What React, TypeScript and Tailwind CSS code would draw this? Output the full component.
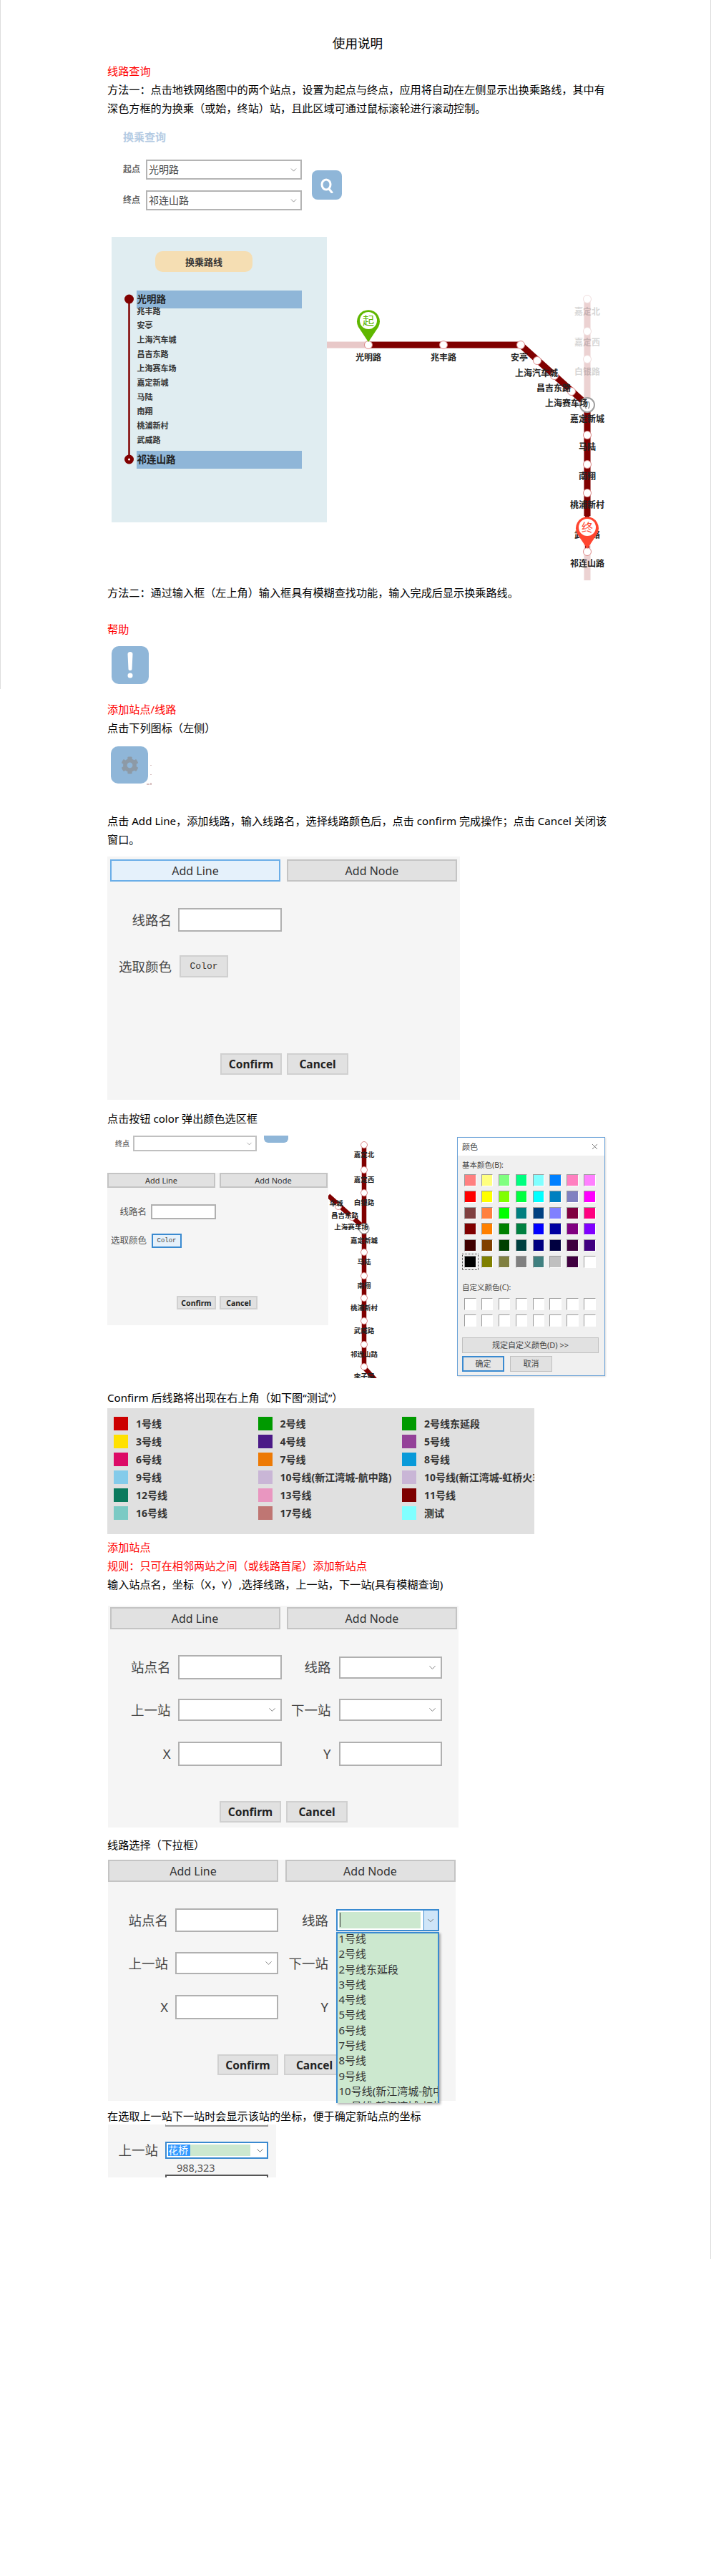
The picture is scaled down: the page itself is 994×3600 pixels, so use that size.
import { ChevronDown, X } from "lucide-react";
import { FaCog } from "react-icons/fa";

const BLUE = "bg-[#8fb6d8]";
const ROUTE = ["兆丰路", "安亭", "上海汽车城", "昌吉东路", "上海赛车场", "嘉定新城", "马陆", "南翔", "桃浦新村", "武威路"];

const LEGEND = [
  ["1号线", "#cc0000"], ["2号线", "#009a00"], ["2号线东延段", "#009a00"],
  ["3号线", "#ffe100"], ["4号线", "#4b1a87"], ["5号线", "#944199"],
  ["6号线", "#dc0a66"], ["7号线", "#ed7a05"], ["8号线", "#099ad9"],
  ["9号线", "#84cbea"], ["10号线(新江湾城-航中路)", "#c9b6d6"], ["10号线(新江湾城-虹桥火车站)", "#c9b6d6"],
  ["12号线", "#0a7a5d"], ["13号线", "#e996c0"], ["11号线", "#7d0000"],
  ["16号线", "#7bcac4"], ["17号线", "#bf7673"], ["测试", "#80ffff"],
];

const BASIC_COLORS = [
  "#ff8080", "#ffff80", "#80ff80", "#00ff80", "#80ffff", "#0080ff", "#ff80c0", "#ff80ff",
  "#ff0000", "#ffff00", "#80ff00", "#00ff40", "#00ffff", "#0080c0", "#8080c0", "#ff00ff",
  "#804040", "#ff8040", "#00ff00", "#008080", "#004080", "#8080ff", "#800040", "#ff0080",
  "#800000", "#ff8000", "#008000", "#008040", "#0000ff", "#0000a0", "#800080", "#8000ff",
  "#400000", "#804000", "#004000", "#004040", "#000080", "#000040", "#400040", "#400080",
  "#000000", "#808000", "#808040", "#808080", "#408080", "#c0c0c0", "#400040", "#ffffff",
];

const DROPDOWN = ["1号线", "2号线", "2号线东延段", "3号线", "4号线", "5号线", "6号线", "7号线", "8号线", "9号线", "10号线(新江湾城-航中路)", "10号线(新江湾城-虹桥火车站)"];

function Line({ children, red }: { children: React.ReactNode; red?: boolean }) {
  return <p className={red ? "text-[#ff0000]" : "text-black"}>{children}</p>;
}

function Tab({ label, active, small }: { label: string; active?: boolean; small?: boolean }) {
  return (
    <div
      className={`flex items-center justify-center border-2 ${
        active ? "border-[#6aaee8] bg-[#e5f1fb]" : "border-[#c4c4c4] bg-[#e1e1e1]"
      } ${small ? "w-[151px] h-[21px] text-[11px]" : "w-[238px] h-[31px] text-[16px]"} text-[#333]`}
    >
      {label}
    </div>
  );
}

function ActionBtn({ label, className }: { label: string; className: string }) {
  return (
    <div className={`flex items-center justify-center border-2 border-[#d0d0d0] bg-[#e1e1e1] font-bold text-[#222] ${className}`}>
      {label}
    </div>
  );
}

function FormInput({ className }: { className: string }) {
  return <div className={`bg-white border-2 border-[#b0b0b0] ${className}`} />;
}

function FormSelect({ className }: { className: string }) {
  return (
    <div className={`flex items-center justify-end pr-[4px] bg-white border-2 border-[#b0b0b0] ${className}`}>
      <ChevronDown size={15} className="text-[#777]" strokeWidth={1.5} />
    </div>
  );
}

function Label({ text, className }: { text: string; className: string }) {
  return <span className={`text-right text-[18.5px] text-[#444] leading-[28px] ${className}`}>{text}</span>;
}

function QuerySelect({ label, value }: { label: string; value: string }) {
  return (
    <div className="flex items-center">
      <span className="w-[32px] text-[12px] font-bold text-[#666]">{label}</span>
      <div className="flex items-center justify-between w-[218px] h-[28px] pl-[2px] pr-[3px] bg-white border-2 border-[#b4b4b4] text-[14px] text-[#444]">
        {value}
        <ChevronDown size={13} className="text-[#777]" strokeWidth={1.5} />
      </div>
    </div>
  );
}

function Node({ x, y, r = 5.5, pale }: { x: number; y: number; r?: number; pale?: boolean }) {
  return <circle cx={x} cy={y} r={r} fill="#fff" stroke={pale ? "#f0dddd" : "#d88"} strokeWidth={1} />;
}

function MapLabel({ x, y, text, size = 12, pale }: { x: number; y: number; text: string; size?: number; pale?: boolean }) {
  return (
    <text x={x} y={y} textAnchor="middle" dominantBaseline="central" fontSize={size} fontWeight={700} fill="#222" opacity={pale ? 0.18 : 1}>
      {text}
    </text>
  );
}

function Interchange({ x, y, r }: { x: number; y: number; r: number }) {
  const k = r / 10;
  return (
    <g>
      <circle cx={x} cy={y} r={r} fill="#fff" stroke="#a0a0a0" strokeWidth={2 * k} />
      <path
        d={`M${x - 1.5 * k} ${y - 5 * k}Q${x - 5 * k} ${y} ${x - 1.5 * k} ${y + 5 * k}M${x + 1.5 * k} ${y - 5 * k}Q${x + 5 * k} ${y} ${x + 1.5 * k} ${y + 5 * k}`}
        fill="none"
        stroke="#999"
        strokeWidth={1.5 * k}
      />
    </g>
  );
}

function Pin({ x, y, color, text }: { x: number; y: number; color: string; text: string }) {
  return (
    <g>
      <path d={`M${x} ${y + 30}L${x - 14} ${y + 9}A16 16 0 1 1 ${x + 14} ${y + 9}Z`} fill={color} />
      <circle cx={x} cy={y} r={12} fill="#fff" />
      <text x={x} y={y} textAnchor="middle" dominantBaseline="central" fontSize={16} fill={color}>
        {text}
      </text>
    </g>
  );
}

function RouteMap() {
  return (
    <svg width={393} height={484} viewBox="457 330 393 484" className="shrink-0">
      <path d="M457 481H515" stroke="#e8c8c8" strokeWidth={9} fill="none" />
      <path d="M821 417V810" stroke="#ecd2d2" strokeWidth={9} fill="none" />
      <path d="M515 481H728L821 565V720" stroke="#800000" strokeWidth={9} fill="none" strokeLinejoin="round" />
      <path d="M821 720V770" stroke="#800000" strokeWidth={6} fill="none" />
      <Node x={821} y={417} pale />
      <Node x={821} y={462} pale />
      <Node x={821} y={501} pale />
      {[
        [515, 481], [620, 481], [728, 481], [751, 503], [775, 524], [799, 546], [821, 607], [821, 648], [821, 688], [821, 770],
      ].map(([x, y]) => (
        <Node key={`${x}-${y}`} x={x} y={y} />
      ))}
      <Interchange x={821} y={565} r={10} />
      <MapLabel x={821} y={434} text="嘉定北" pale />
      <MapLabel x={821} y={477} text="嘉定西" pale />
      <MapLabel x={821} y={518} text="白银路" pale />
      <MapLabel x={515} y={498} text="光明路" />
      <MapLabel x={620} y={498} text="兆丰路" />
      <MapLabel x={726} y={498} text="安亭" />
      <MapLabel x={750} y={520} text="上海汽车城" />
      <MapLabel x={774} y={541} text="昌吉东路" />
      <MapLabel x={792} y={562} text="上海赛车场" />
      <MapLabel x={821} y={584} text="嘉定新城" />
      <MapLabel x={821} y={623} text="马陆" />
      <MapLabel x={821} y={664} text="南翔" />
      <MapLabel x={821} y={704} text="桃浦新村" />
      <MapLabel x={821} y={746} text="武威路" />
      <MapLabel x={821} y={786} text="祁连山路" />
      <Pin x={515} y={447} color="#5fb700" text="起" />
      <Pin x={821} y={736} color="#ff4530" text="终" />
    </svg>
  );
}

function SmallMap() {
  const nodes = [1599, 1634, 1666, 1749, 1782, 1813, 1845, 1878, 1909];
  return (
    <svg width={180} height={339} viewBox="459 1586 180 339" className="shrink-0">
      <path d="M459 1670L509 1715" stroke="#800000" strokeWidth={6.5} fill="none" />
      <path d="M509 1599V1910L527 1930" stroke="#800000" strokeWidth={6.5} fill="none" />
      {nodes.map((y) => (
        <Node key={y} x={509} y={y} r={4.5} />
      ))}
      <Node x={473} y={1685} r={4.5} />
      <Node x={492} y={1700} r={4.5} />
      <Interchange x={509} y={1716} r={7} />
      <MapLabel x={470} y={1680} text="车城" size={9.5} />
      <MapLabel x={482} y={1697} text="昌吉东路" size={9.5} />
      <MapLabel x={491} y={1713} text="上海赛车场" size={9.5} />
      <MapLabel x={509} y={1612} text="嘉定北" size={9.5} />
      <MapLabel x={509} y={1647} text="嘉定西" size={9.5} />
      <MapLabel x={509} y={1679} text="白银路" size={9.5} />
      <MapLabel x={509} y={1732} text="嘉定新城" size={9.5} />
      <MapLabel x={509} y={1762} text="马陆" size={9.5} />
      <MapLabel x={509} y={1795} text="南翔" size={9.5} />
      <MapLabel x={509} y={1826} text="桃浦新村" size={9.5} />
      <MapLabel x={509} y={1858} text="武威路" size={9.5} />
      <MapLabel x={509} y={1891} text="祁连山路" size={9.5} />
      <MapLabel x={509} y={1922} text="李子园" size={9.5} />
    </svg>
  );
}

function ColorDialog() {
  return (
    <div className="w-[207px] h-[334px] mt-[2px] shrink-0 border border-[#6aa2d8] bg-[#f0f0f0] text-[#444] shadow-[1px_1px_2px_rgba(0,0,0,0.15)]">
      <div className="flex items-center justify-between h-[25px] pl-[6px] pr-[7px] bg-white text-[11px]">
        颜色
        <X size={13} strokeWidth={1.2} className="text-[#333]" />
      </div>
      <div className="pl-[6px]">
        <p className="mt-[6px] h-[15px] leading-[15px] text-[10.5px]">基本颜色(B):</p>
        <div className="grid grid-cols-[repeat(8,16.5px)] gap-x-[7.4px] gap-y-[5.8px] mt-[5px] ml-[3px]">
          {BASIC_COLORS.map((c, i) => (
            <div
              key={i}
              className={`h-[17px] border border-t-[#9a9a9a] border-l-[#9a9a9a] border-r-white border-b-white ${i === 40 ? "outline outline-offset-2 outline-1 outline-dotted outline-[#333]" : ""}`}
              style={{ backgroundColor: c }}
            />
          ))}
        </div>
        <p className="mt-[20px] h-[15px] leading-[15px] text-[10.5px]">自定义颜色(C):</p>
        <div className="grid grid-cols-[repeat(8,16.5px)] gap-x-[7.4px] gap-y-[5.8px] mt-[7px] ml-[3px]">
          {Array.from({ length: 16 }).map((_, i) => (
            <div key={i} className="h-[17px] bg-white border border-t-[#9a9a9a] border-l-[#9a9a9a] border-r-white border-b-white" />
          ))}
        </div>
        <div className="flex items-center justify-center w-[191px] h-[22px] mt-[15px] border border-[#c0c0c0] bg-[#e1e1e1] text-[11px]">
          规定自定义颜色(D) &gt;&gt;
        </div>
        <div className="flex gap-[8px] mt-[4px]">
          <div className="flex items-center justify-center w-[59px] h-[22px] border-2 border-[#3a8ad0] bg-[#e6e6e6] text-[11px]">确定</div>
          <div className="flex items-center justify-center w-[59px] h-[22px] border border-[#c0c0c0] bg-[#e1e1e1] text-[11px]">取消</div>
        </div>
      </div>
    </div>
  );
}

export default function App() {
  return (
    <div className="relative bg-white min-h-[3600px] font-['Noto_Sans','Noto_Sans_CJK_SC',sans-serif] text-[15.14px] leading-[26px]">
      <div className="absolute left-0 top-0 w-px h-[963px] bg-[#dddddd]" />
      <div className="absolute right-0 top-0 w-px h-[3157px] bg-[#dddddd]" />

      <div className="w-[700px] ml-[150px] pt-[47px]">
        <h1 className="text-center text-[17.6px] font-normal mb-[13px]">使用说明</h1>

        <Line red>线路查询</Line>
        <Line>
          方法一：点击地铁网络图中的两个站点，设置为起点与终点，应用将自动在左侧显示出换乘路线，其中有深色方框的为换乘（或始，终站）站，且此区域可通过鼠标滚轮进行滚动控制。
        </Line>

        {/* query form */}
        <div className="mt-[17px] ml-[22px] h-[20px] text-[15px] leading-[20px] font-bold text-[#b5cbe3]">换乘查询</div>
        <div className="flex items-center mt-[22px] ml-[22px]">
          <div className="flex flex-col gap-[15px]">
            <QuerySelect label="起点" value="光明路" />
            <QuerySelect label="终点" value="祁连山路" />
          </div>
          <div className={`flex items-center justify-center w-[42px] h-[41px] ml-[14px] rounded-[8px] ${BLUE}`}>
            <svg width="20" height="22" viewBox="0 0 20 22" fill="none" stroke="#fff" strokeWidth="3">
              <ellipse cx="9" cy="10" rx="6" ry="7" />
              <path d="M13 16l4 5" strokeLinecap="round" />
            </svg>
          </div>
        </div>

        {/* route panel + map */}
        <div className="flex mt-[37px]">
          <div className="w-[301px] h-[399px] ml-[6px] pt-[20px] bg-[#e0edf1] shrink-0">
            <div className="flex items-center justify-center w-[136px] h-[29px] ml-[61px] rounded-[10px] bg-[#f5deb3] text-[13px] font-bold text-[#333]">
              换乘路线
            </div>
            <div className="flex mt-[26px] ml-[17.5px]">
              <svg width="13" height="249" viewBox="0 0 13 249" className="shrink-0">
                <path d="M6.5 12V236" stroke="#800000" strokeWidth="2.5" />
                <circle cx="6.5" cy="12" r="6.5" fill="#800000" />
                <circle cx="6.5" cy="236" r="6.5" fill="#800000" />
                <circle cx="6.5" cy="236" r="1.5" fill="#fff" />
              </svg>
              <div className="w-[231px] ml-[4px]">
                <div className={`h-[25px] pl-[1px] ${BLUE} text-[13.5px] leading-[25px] font-bold text-[#222]`}>光明路</div>
                <div className="-mt-[6px] mb-[5px]">
                  {ROUTE.map((s) => (
                    <div key={s} className="h-[20px] pl-[1px] text-[11px] leading-[20px] font-bold text-[#333]">
                      {s}
                    </div>
                  ))}
                </div>
                <div className={`h-[25px] pl-[1px] ${BLUE} text-[13.5px] leading-[25px] font-bold text-[#222]`}>祁连山路</div>
              </div>
            </div>
          </div>
          <RouteMap />
        </div>

        <Line>方法二：通过输入框（左上角）输入框具有模糊查找功能，输入完成后显示换乘路线。</Line>

        <div className="mt-[25px]">
          <Line red>帮助</Line>
        </div>
        <div className={`flex items-center justify-center w-[52px] h-[53px] mt-[11px] ml-[6px] rounded-[10px] ${BLUE}`}>
          <svg width="8" height="38" viewBox="0 0 8 38" fill="#fff">
            <path d="M4 0c2 0 3.500 1 3.500 3L6.500 24c0 1-1 2-2.500 2s-2.500-1-2.500-2L.5 3C.5 1 2 0 4 0z" />
            <circle cx="4" cy="33" r="3.500" />
          </svg>
        </div>

        <div className="mt-[22px]">
          <Line red>添加站点/线路</Line>
        </div>
        <Line>点击下列图标（左侧）</Line>
        <div className="flex items-end mt-[13px] ml-[5px]">
          <div className={`flex items-center justify-center w-[52px] h-[52px] rounded-[10px] ${BLUE}`}>
            <FaCog size={25} className="text-[#8d9aa6]" />
          </div>
          <svg width="8" height="32" viewBox="0 0 8 32" className="-ml-[2px] -mb-[2px]">
            <path d="M6 4v1M6 17v1M6 29v3M0 31h4" stroke="#b08080" strokeWidth="1" />
          </svg>
        </div>

        <div className="mt-[39px]">
          <Line>
            点击 Add Line，添加线路，输入线路名，选择线路颜色后，点击 confirm 完成操作；点击 Cancel 关闭该
            <br />
            窗口。
          </Line>
        </div>

        {/* add line panel */}
        <div className="w-[493px] h-[340px] mt-[11px] pt-[4px] pl-[4px] bg-[#f5f5f5]">
          <div className="flex gap-[9px]">
            <Tab label="Add Line" active />
            <Tab label="Add Node" />
          </div>
          <div className="flex items-center mt-[37px]">
            <Label text="线路名" className="w-[86px]" />
            <FormInput className="w-[145px] h-[33px] ml-[9px]" />
          </div>
          <div className="flex items-center mt-[33px]">
            <Label text="选取颜色" className="w-[86px]" />
            <div className="flex items-center justify-center w-[68px] h-[31px] ml-[11px] border-2 border-[#d0d0d0] bg-[#e1e1e1] font-['Liberation_Mono',monospace] text-[13px] text-[#333]">
              Color
            </div>
          </div>
          <div className="flex gap-[7px] mt-[106px] ml-[154px]">
            <ActionBtn label="Confirm" className="w-[86px] h-[30px] text-[15.5px]" />
            <ActionBtn label="Cancel" className="w-[86px] h-[30px] text-[15.5px]" />
          </div>
        </div>

        <div className="mt-[13px]">
          <Line>点击按钮 color 弹出颜色选区框</Line>
        </div>

        {/* colour picker figure */}
        <div className="flex mt-[11px] h-[339px]">
          <div className="w-[309px] shrink-0">
            <div className="flex items-start h-[52px] ml-[11px]">
              <span className="w-[25px] mt-[4px] text-[10px] leading-[14px] font-bold text-[#777]">终点</span>
              <div className="flex items-center justify-end w-[173px] h-[22px] pr-[3px] bg-white border-2 border-[#c0c0c0]">
                <ChevronDown size={11} className="text-[#888]" strokeWidth={1.5} />
              </div>
              <div className={`w-[34px] h-[10px] ml-[10px] rounded-b-[6px] ${BLUE}`} />
            </div>
            <div className="h-[213px] bg-[#f5f5f5]">
              <div className="flex gap-[5.500px]">
                <Tab label="Add Line" small />
                <Tab label="Add Node" small />
              </div>
              <div className="flex items-center mt-[23px]">
                <span className="w-[55px] text-right text-[12.500px] leading-[20px] text-[#555]">线路名</span>
                <FormInput className="w-[91px] h-[21px] ml-[6px]" />
              </div>
              <div className="flex items-center mt-[20px]">
                <span className="w-[55px] text-right text-[12.500px] leading-[20px] text-[#555]">选取颜色</span>
                <div className="flex items-center justify-center w-[42px] h-[20px] ml-[7px] border-2 border-[#3a8ad0] bg-[#e5f1fb] font-['Liberation_Mono',monospace] text-[9px] text-[#444]">
                  Color
                </div>
              </div>
              <div className="flex gap-[5px] mt-[67px] ml-[97px]">
                <ActionBtn label="Confirm" className="w-[55px] h-[19px] text-[10.500px]" />
                <ActionBtn label="Cancel" className="w-[53px] h-[19px] text-[10.500px]" />
              </div>
            </div>
          </div>
          <SmallMap />
          <ColorDialog />
        </div>

        <div className="mt-[14px]">
          <Line>Confirm 后线路将出现在右上角（如下图“测试”）</Line>
        </div>

        {/* legend */}
        <div className="w-[597px] h-[176px] mt-[2px] pt-[12px] pl-[9px] bg-[#e0e0e0] overflow-hidden">
          <div className="grid grid-cols-[201.5px_201.5px_185px] gap-y-[6px]">
            {LEGEND.map(([name, color]) => (
              <div key={name} className="flex items-center h-[19px] whitespace-nowrap overflow-hidden">
                <div className="w-[20px] h-[19px] shrink-0" style={{ backgroundColor: color }} />
                <span className="ml-[11px] text-[14px] leading-[19px] font-bold text-[#333]">{name}</span>
              </div>
            ))}
          </div>
        </div>

        <div className="mt-[5px]">
          <Line red>添加站点</Line>
          <Line red>规则：只可在相邻两站之间（或线路首尾）添加新站点</Line>
          <Line>输入站点名，坐标（X，Y）,选择线路，上一站，下一站(具有模糊查询)</Line>
        </div>

        {/* add node panel */}
        <div className="w-[490px] h-[310px] mt-[17px] ml-px pt-[2px] pl-[2.500px] bg-[#f5f5f5]">
          <div className="flex gap-[9.500px]">
            <Tab label="Add Line" />
            <Tab label="Add Node" />
          </div>
          <div className="flex items-center mt-[36px]">
            <Label text="站点名" className="w-[85px]" />
            <FormInput className="w-[145px] h-[34px] ml-[10px]" />
            <Label text="线路" className="w-[69px]" />
            <FormSelect className="w-[144px] h-[31px] ml-[11px]" />
          </div>
          <div className="flex items-center mt-[27px]">
            <Label text="上一站" className="w-[85px]" />
            <FormSelect className="w-[145px] h-[31px] ml-[10px]" />
            <Label text="下一站" className="w-[69px]" />
            <FormSelect className="w-[144px] h-[31px] ml-[11px]" />
          </div>
          <div className="flex items-center mt-[29px]">
            <Label text="X" className="w-[85px]" />
            <FormInput className="w-[145px] h-[34px] ml-[10px]" />
            <Label text="Y" className="w-[69px]" />
            <FormInput className="w-[144px] h-[34px] ml-[11px]" />
          </div>
          <div className="flex gap-[7px] mt-[49px] ml-[153.500px]">
            <ActionBtn label="Confirm" className="w-[86px] h-[30px] text-[15.5px]" />
            <ActionBtn label="Cancel" className="w-[86px] h-[30px] text-[15.5px]" />
          </div>
        </div>

        <div className="mt-[11px]">
          <Line>线路选择（下拉框）</Line>
        </div>

        {/* line dropdown */}
        <div className="w-[486px] h-[337px] mt-[8px] ml-px bg-[#f5f5f5]">
          <div className="flex gap-[9.500px]">
            <Tab label="Add Line" />
            <Tab label="Add Node" />
          </div>
          <div className="flex items-center mt-[37px]">
            <Label text="站点名" className="w-[84px]" />
            <FormInput className="w-[144px] h-[33px] ml-[10px]" />
            <Label text="线路" className="w-[70px]" />
            <div className="relative w-[144px] h-[31px] ml-[10.500px] flex border-2 border-[#3a8ad0] bg-white">
              <div className="flex-1 m-[2px] mr-[4px] bg-[#cce8cf]">
                <div className="w-px h-[20px] mt-[1px] ml-[1px] bg-[#333]" />
              </div>
              <div className="flex items-center justify-center w-[20px] bg-[#cfe5f8] border-l border-[#3a8ad0]">
                <ChevronDown size={14} className="text-[#666]" strokeWidth={1.5} />
              </div>
              <div className="absolute -left-[2px] top-[30px] w-[144px] h-[239px] pl-[2px] overflow-hidden border-x-2 border-t-2 border-[#3a8ad0] bg-[#cce8cf] text-[15px] leading-[21.3px] text-[#333] whitespace-nowrap shadow-[2px_2px_3px_rgba(0,0,0,0.3)]">
                <div className="-mt-[3px]">
                  {DROPDOWN.map((o) => (
                    <div key={o}>{o}</div>
                  ))}
                </div>
              </div>
            </div>
          </div>
          <div className="flex items-center mt-[28px]">
            <Label text="上一站" className="w-[84px]" />
            <FormSelect className="w-[144px] h-[31px] ml-[10px]" />
            <Label text="下一站" className="w-[70px]" />
          </div>
          <div className="flex items-center mt-[29px]">
            <Label text="X" className="w-[84px]" />
            <FormInput className="w-[144px] h-[34px] ml-[10px]" />
            <Label text="Y" className="w-[70px]" />
          </div>
          <div className="flex gap-[8px] mt-[49px] ml-[153px]">
            <ActionBtn label="Confirm" className="w-[85px] h-[29px] text-[15.5px]" />
            <ActionBtn label="Cancel" className="w-[85px] h-[29px] text-[15.5px]" />
          </div>
        </div>

        <div className="mt-[8px]">
          <Line>在选取上一站下一站时会显示该站的坐标，便于确定新站点的坐标</Line>
        </div>

        {/* coordinate hint */}
        <div className="w-[235px] h-[74px] -mt-px ml-px bg-[#f5f5f5] overflow-hidden">
          <div className="w-[144px] h-[3px] ml-[80px] border-b-2 border-x border-[#999]" />
          <div className="flex items-center mt-[19px]">
            <Label text="上一站" className="w-[70px]" />
            <div className="flex items-center w-[144px] h-[24px] ml-[10px] pl-[2px] border-2 border-[#3a8ad0] bg-white">
              <div className="w-[115px] h-[16px] bg-[#cce8cf]">
                <div className="w-[31px] h-[16px] bg-[#3399ff] text-[14px] leading-[16px] text-white">花桥</div>
              </div>
              <ChevronDown size={15} className="ml-[6px] text-[#666]" strokeWidth={1.5} />
            </div>
          </div>
          <div className="h-[20px] ml-[96px] text-[14.5px] leading-[20px] text-[#555]">988,323</div>
          <div className="w-[144px] h-[8px] ml-[80px] bg-white border-2 border-[#555]" />
        </div>
      </div>
    </div>
  );
}
